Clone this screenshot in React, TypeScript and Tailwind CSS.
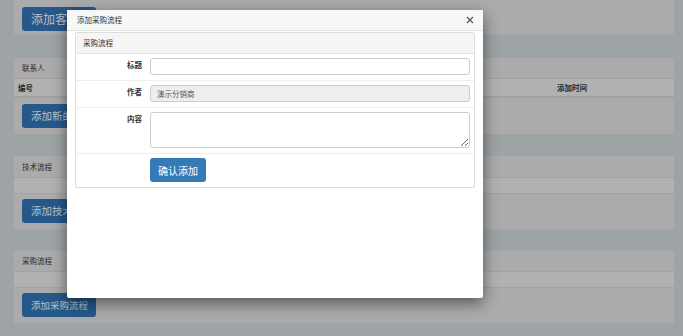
import React from "react";

const font = { fontFamily: '"Noto Sans CJK SC", "Noto Sans", sans-serif' };

function BgButton({ children, size, w }: { children: React.ReactNode; size: string; w: string }) {
  return (
    <div
      className={`${w} h-[24px] rounded-[3px] bg-[#26598a] text-[#b9c3cd] flex items-center justify-start pl-[9px] whitespace-nowrap overflow-hidden ${size}`}
    >
      {children}
    </div>
  );
}

export default function App() {
  return (
    <div className="relative w-[683px] h-[336px] overflow-hidden bg-[#9ea3a6]" style={font}>
      {/* background page */}
      <div className="pl-[14px] pr-[9px] flex flex-col">
        {/* panel 1 */}
        <div className="h-[35px] bg-[#ababab] border-b border-[#a3a3a3] px-[8px] pt-[7px]">
          <BgButton w="w-[74px]" size="text-[12px]">添加客户</BgButton>
        </div>

        {/* panel 2 */}
        <div className="mt-[23px] bg-[#ababab] border-b border-[#a3a3a3] flex flex-col">
          <div className="h-[21px] border-b border-[#a2a2a2] flex items-center px-[8px] text-[7.5px] text-[#2a2a2a]">
            联系人
          </div>
          <div className="h-[19px] bg-[#b1b1b1] border-b-2 border-[#a2a2a2] flex items-center text-[7.5px] font-bold text-[#2a2a2a]">
            <div className="pl-[4px]">编号</div>
            <div className="ml-[524px]">添加时间</div>
          </div>
          <div className="px-[8px] pt-[6px] pb-[6px]">
            <BgButton w="w-[96px]" size="text-[10.5px]">添加新的联系人</BgButton>
          </div>
        </div>

        {/* panel 3 */}
        <div className="mt-[21px] bg-[#ababab] border-b border-[#a3a3a3] flex flex-col">
          <div className="h-[22px] border-b border-[#a2a2a2] flex items-center px-[8px] text-[7.5px] text-[#2a2a2a]">
            技术流程
          </div>
          <div className="h-[16px] bg-[#b1b1b1] border-b border-[#a2a2a2]" />
          <div className="px-[8px] pt-[5px] pb-[6px]">
            <BgButton w="w-[84px]" size="text-[10.5px]">添加技术流程</BgButton>
          </div>
        </div>

        {/* panel 4 */}
        <div className="mt-[21px] bg-[#ababab] border-b border-[#a3a3a3] flex flex-col">
          <div className="h-[21px] border-b border-[#a2a2a2] flex items-center px-[8px] text-[7.5px] text-[#2a2a2a]">
            采购流程
          </div>
          <div className="h-[16px] bg-[#b1b1b1] border-b border-[#a2a2a2]" />
          <div className="px-[8px] pt-[5px] pb-[6px]">
            <BgButton w="w-[74px]" size="text-[9.5px]">添加采购流程</BgButton>
          </div>
        </div>
      </div>

      {/* modal */}
      <div className="absolute left-[67px] top-[10px] w-[416px] h-[288px] bg-white rounded-[2px] shadow-[0_5px_15px_rgba(0,0,0,0.5)] flex flex-col">
        <div className="h-[21px] bg-[#f7f7f7] border-b border-[#e5e5e5] flex items-center justify-between pl-[10px] pr-[9px]">
          <span className="text-[7.5px] text-[#333]">添加采购流程</span>
          <svg width="8" height="8" viewBox="0 0 8 8" className="text-[#555]">
            <path d="M1 1L7 7M7 1L1 7" stroke="currentColor" strokeWidth="1.2" />
          </svg>
        </div>
        <div className="px-[8px] pt-[1px]">
          <div className="border border-[#dddddd] rounded-[2px] flex flex-col">
            <div className="h-[21px] bg-[#f5f5f5] border-b border-[#e6e6e6] flex items-center pl-[7px] text-[7.5px] text-[#333]">
              采购流程
            </div>
            <div className="flex h-[27px] border-b border-[#eeeeee] items-start pt-[4px]">
              <div className="w-[74px] pr-[8px] text-right text-[7.5px] font-bold text-[#333] pt-[1px]">标题</div>
              <div className="w-[320px] h-[17px] border border-[#cccccc] rounded-[3px] bg-white" />
            </div>
            <div className="flex h-[27px] border-b border-[#eeeeee] items-start pt-[4px]">
              <div className="w-[74px] pr-[8px] text-right text-[7.5px] font-bold text-[#333] pt-[1px]">作者</div>
              <div className="w-[320px] h-[17px] border border-[#cccccc] rounded-[3px] bg-[#eeeeee] flex items-center pl-[6px] text-[7.5px] text-[#555]">
                演示分销商
              </div>
            </div>
            <div className="flex h-[46px] border-b border-[#eeeeee] items-start pt-[4px]">
              <div className="w-[74px] pr-[8px] text-right text-[7.5px] font-bold text-[#333] pt-[1px]">内容</div>
              <textarea className="w-[320px] h-[36px] border border-[#cccccc] rounded-[3px] bg-white outline-none" />
            </div>
            <div className="flex h-[33px] items-start pt-[4px]">
              <div className="w-[74px]" />
              <div className="w-[56px] h-[24px] rounded-[3px] bg-[#337ab7] text-white text-[10px] flex items-center justify-center">
                确认添加
              </div>
            </div>
          </div>
        </div>
      </div>
    </div>
  );
}
